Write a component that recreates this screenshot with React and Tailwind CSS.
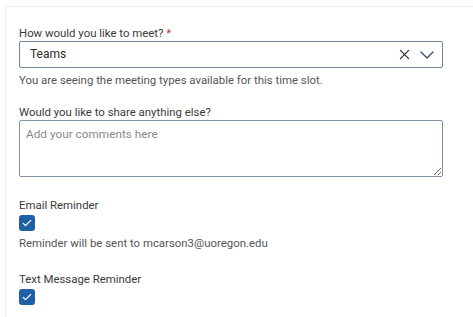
import React, { useState } from 'react';

const Check = () => (
  <svg viewBox="0 0 16 16" className="w-[12px] h-[12px]" fill="none" stroke="white" strokeWidth="1.8" strokeLinecap="round" strokeLinejoin="round">
    <path d="M3 8.5l3 3 7-7" />
  </svg>
);

const CheckBox = ({ checked, onChange }) => (
  <button
    onClick={onChange}
    className={`block w-[16px] h-[16px] rounded-[3px] flex items-center justify-center ${checked ? 'bg-[#1f5fa6]' : 'bg-white border border-[#6f8396]'}`}
  >
    {checked && <Check />}
  </button>
);

const App = () => {
  const [email, setEmail] = useState(true);
  const [sms, setSms] = useState(true);

  return (
    <div className="w-[473px] h-[317px] bg-white overflow-hidden pl-[5px] pt-[6px] font-['Roboto',sans-serif] text-[11.4px] leading-[15px] text-[#3a3a3a]">
      <div className="h-[400px] border-l border-t border-[#ececec] pl-[13px] pr-[30px] pt-[19px]">
        {/* Meeting type */}
        <div>
          How would you like to meet? <span className="text-[#b2363f]">*</span>
        </div>
        <div className="h-[27px] w-[424px] border border-[#71869a] rounded-[2px] flex items-center pl-[10px] pr-[8px]">
          <span className="flex-1 text-[#2b2b2b] text-[12px]">Teams</span>
          <svg viewBox="0 0 12 12" className="w-[11px] h-[11px] mr-[10px]" stroke="#2a3440" strokeWidth="1.4" strokeLinecap="round">
            <path d="M1.5 1.5l9 9M10.5 1.5l-9 9" />
          </svg>
          <svg viewBox="0 0 14 8" className="w-[14px] h-[8px]" fill="none" stroke="#37536e" strokeWidth="1.4" strokeLinecap="round" strokeLinejoin="round">
            <path d="M1 1l6 6 6-6" />
          </svg>
        </div>
        <div className="mt-[5px] text-[#555]">You are seeing the meeting types available for this time slot.</div>

        {/* Comments */}
        <div className="mt-[17px]">Would you like to share anything else?</div>
        <textarea
          placeholder="Add your comments here"
          className="block w-[424px] h-[57px] border border-[#8093a6] rounded-[2px] px-[6px] py-[6px] text-[11.8px] placeholder-[#8a8a8a] outline-none"
        />

        {/* Email */}
        <div className="mt-[21px]">Email Reminder</div>
        <div className="mt-[2px]">
          <CheckBox checked={email} onChange={() => setEmail(!email)} />
        </div>
        <div className="mt-[5px] text-[#555]">Reminder will be sent to mcarson3@uoregon.edu</div>

        {/* SMS */}
        <div className="mt-[21px]">Text Message Reminder</div>
        <div className="mt-[2px]">
          <CheckBox checked={sms} onChange={() => setSms(!sms)} />
        </div>
      </div>
    </div>
  );
};

export default App;
